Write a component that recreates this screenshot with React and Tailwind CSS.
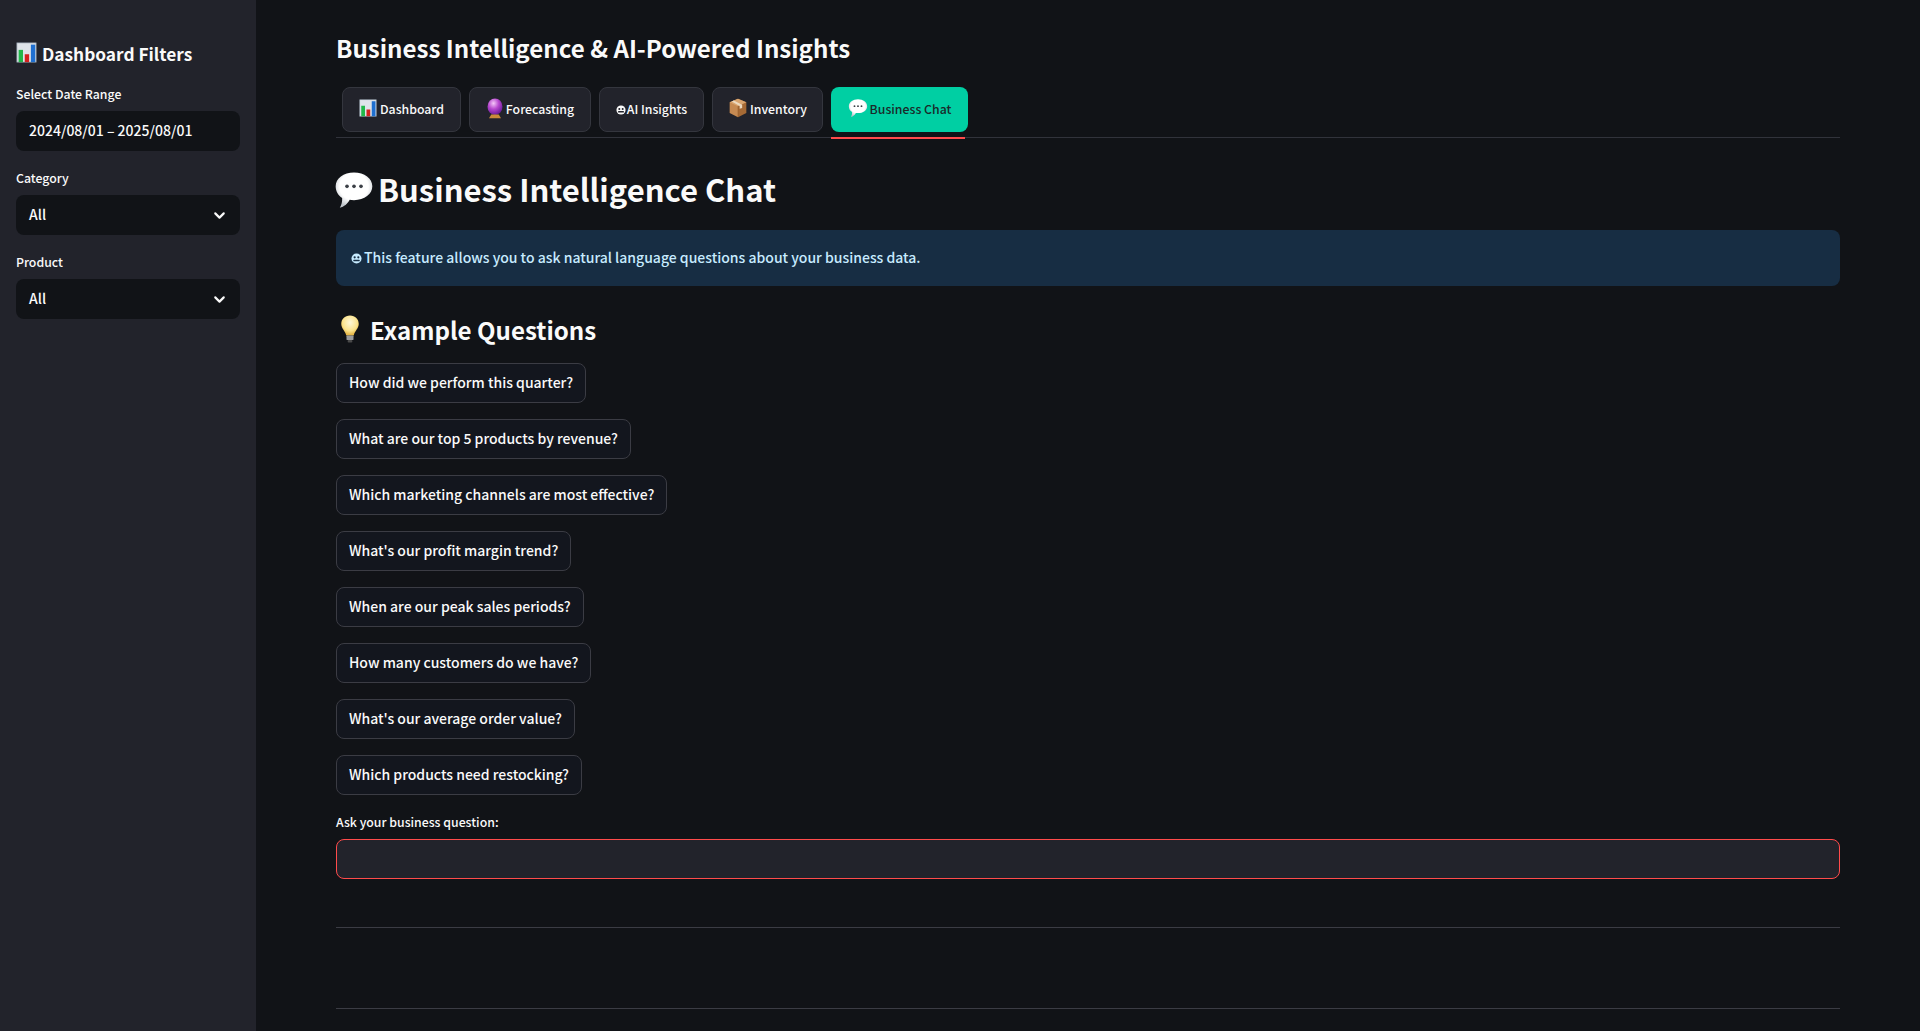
import React from 'react';
import { ChevronDown } from 'lucide-react';

const FONT = { fontFamily: '"Noto Sans CJK SC", "Noto Sans", sans-serif' };

const ChartIcon = ({ className }) => (
  <svg viewBox="0 0 24 24" className={className}>
    <rect x="1" y="1" width="22" height="22" fill="#dfe4ea" />
    <rect x="1" y="1" width="22" height="22" fill="none" stroke="#8f9aa6" strokeWidth="0.8" />
    <rect x="3" y="9" width="5" height="14" fill="#22b84a" />
    <rect x="10" y="14" width="5" height="9" fill="#d3221f" />
    <rect x="17" y="3" width="5" height="20" fill="#1f6fd0" />
  </svg>
);

const BallIcon = ({ className }) => (
  <svg viewBox="0 0 24 28" className={className}>
    <defs>
      <radialGradient id="ball" cx="40%" cy="30%" r="70%">
        <stop offset="0%" stopColor="#f4c6f8" />
        <stop offset="50%" stopColor="#b848cf" />
        <stop offset="100%" stopColor="#6a1b9a" />
      </radialGradient>
    </defs>
    <ellipse cx="12" cy="11.500" rx="10" ry="11" fill="url(#ball)" />
    <path d="M7 22h10l3 5H4z" fill="#c98a3a" />
  </svg>
);

const BoxIcon = ({ className }) => (
  <svg viewBox="0 0 24 24" className={className}>
    <path d="M12 1l10 4v13l-10 5z" fill="#a66a35" />
    <path d="M12 1L2 5v13l10 5z" fill="#c68a52" />
    <path d="M2 5l10 5 10-5-10-4z" fill="#d9a56f" />
    <path d="M7 3l10 5v4l-3 1V9.500L4.500 4.200z" fill="#ecd9bf" />
    <path d="M12 10v13" stroke="#8a5528" strokeWidth="0.6" />
  </svg>
);

const BubbleIcon = ({ className, id }) => (
  <svg viewBox="0 0 24 24" className={className}>
    <defs>
      <radialGradient id={id} cx="50%" cy="40%" r="60%">
        <stop offset="65%" stopColor="#ffffff" />
        <stop offset="100%" stopColor="#bfc4ca" />
      </radialGradient>
    </defs>
    <path
      d="M12 1.500c6.300 0 11 3.600 11 8.300s-4.700 8.300-11 8.300c-.9 0-1.800-.1-2.600-.2C8.200 20.300 6 22.200 3.500 22.600c1-1.600 1.500-3.400 1.400-5.800C2.500 15.300 1 12.800 1 9.800 1 5.100 5.700 1.500 12 1.500z"
      fill={`url(#${id})`}
    />
    <circle cx="7.800" cy="9.800" r="1.100" fill="#3b3f46" />
    <circle cx="12" cy="9.800" r="1.100" fill="#3b3f46" />
    <circle cx="16.200" cy="9.800" r="1.100" fill="#3b3f46" />
  </svg>
);

const BulbIcon = ({ className }) => (
  <svg viewBox="0 0 24 24" className={className}>
    <defs>
      <radialGradient id="bulb" cx="50%" cy="35%" r="60%">
        <stop offset="0%" stopColor="#fff8d8" />
        <stop offset="70%" stopColor="#fbe38c" />
        <stop offset="100%" stopColor="#e8b94a" />
      </radialGradient>
    </defs>
    <path d="M12 0.500c4.500 0 7.500 3.200 7.500 7.200 0 3.800-3.600 6.200-4.300 9.800H8.800C8.100 13.900 4.500 11.500 4.500 7.700 4.500 3.700 7.500.5 12 .5z" fill="url(#bulb)" />
    <rect x="9" y="17.500" width="6" height="4" rx="0.800" fill="#9a9a9a" />
    <rect x="10" y="21.500" width="4" height="2" rx="0.800" fill="#4a4a4a" />
  </svg>
);

const RobotGlyph = ({ className, color = 'currentColor', bg = '#22232b' }) => (
  <svg viewBox="0 0 12 12" className={className}>
    <circle cx="6" cy="6" r="5.500" fill={color} />
    <circle cx="4" cy="4.700" r="1.200" fill={bg} />
    <circle cx="8" cy="4.700" r="1.200" fill={bg} />
    <rect x="2.500" y="7.300" width="7" height="1.800" rx="0.600" fill={bg} />
  </svg>
);

const tabs = [
  { label: 'Dashboard', icon: <ChartIcon className="w-[18px] h-[18px] mb-[4px]" />, width: 'w-[119px]', gap: 'gap-[3px]' },
  { label: 'Forecasting', icon: <BallIcon className="w-[18px] h-[21px] mb-[3px]" />, width: 'w-[122px]', gap: 'gap-[2px]' },
  { label: 'AI Insights', icon: <RobotGlyph className="w-[10px] h-[10px]" />, width: 'w-[105px]', gap: 'gap-[1px]' },
  { label: 'Inventory', icon: <BoxIcon className="w-[20px] h-[20px] mb-[4px]" />, width: 'w-[111px]', gap: 'gap-[2px]' },
];

const questions = [
  'How did we perform this quarter?',
  'What are our top 5 products by revenue?',
  'Which marketing channels are most effective?',
  "What's our profit margin trend?",
  'When are our peak sales periods?',
  'How many customers do we have?',
  "What's our average order value?",
  'Which products need restocking?',
];

const SidebarField = ({ label, value, select }) => (
  <div className="flex flex-col">
    <label className="text-[12.3px] leading-[20px] font-medium text-[#fafafa] mb-[7px]">{label}</label>
    <div className="h-[40px] rounded-lg bg-[#111317] flex items-center justify-between pl-[13px] pr-[12px] text-[14px] font-medium text-[#fafafa]">
      <span className="-mt-[1px]">{value}</span>
      {select && <ChevronDown size={17} strokeWidth={3} className="text-[#fafafa]" />}
    </div>
  </div>
);

export default function App() {
  return (
    <div style={FONT} className="flex h-[1031px] overflow-hidden bg-[#111317] text-[#fafafa]">
      <aside className="w-[256px] shrink-0 bg-[#22232b] px-4 pt-[41px] flex flex-col">
        <div className="flex items-center gap-[5px] h-[26px] mb-[17px]">
          <ChartIcon className="w-[21px] h-[21px] mb-[3px]" />
          <h2 className="text-[17.3px] leading-[26px] font-semibold">Dashboard Filters</h2>
        </div>
        <div className="flex flex-col gap-[17px]">
          <SidebarField label="Select Date Range" value="2024/08/01 – 2025/08/01" />
          <SidebarField label="Category" value="All" select />
          <SidebarField label="Product" value="All" select />
        </div>
      </aside>

      <main className="flex-1 pl-[80px] pr-[80px] pt-[29px] min-w-0">
        <h1 className="text-[24.1px] leading-[38px] font-semibold whitespace-nowrap">Business Intelligence &amp; AI-Powered Insights</h1>

        {/* Tabs */}
        <div className="mt-[20px] h-[51px] flex gap-[8px] pl-[6px] border-b border-[#31333b]">
          {tabs.map((tab) => (
            <button
              key={tab.label}
              className={`${tab.width} ${tab.gap} h-[45px] rounded-lg bg-[#22232b] border border-[#34363e] flex items-center justify-center text-[12.3px] font-medium text-[#fafafa] whitespace-nowrap`}
            >
              {tab.icon}
              <span>{tab.label}</span>
            </button>
          ))}
          <div className="relative h-[51px]">
            <button className="w-[137px] h-[45px] rounded-lg bg-[#00cfa3] flex items-center justify-center gap-[2px] text-[12.3px] font-medium text-[#1b2a2a] whitespace-nowrap">
              <BubbleIcon id="bubble-tab" className="w-[20px] h-[20px] mb-[4px]" />
              <span>Business Chat</span>
            </button>
            <div className="absolute left-0 bottom-[-1px] w-[134px] h-[2px] bg-[#ff4b4b]" />
          </div>
        </div>

        <div className="mt-[26px] flex items-center h-[50px]">
          <BubbleIcon id="bubble-head" className="w-[40px] h-[40px] mt-[2px] -ml-[2px]" />
          <h1 className="ml-[4px] text-[31px] leading-[50px] font-semibold whitespace-nowrap">Business Intelligence Chat</h1>
        </div>

        <div className="mt-[16px] h-[56px] rounded-lg bg-[#172d43] flex items-center gap-[2px] px-[15px] text-[14px] font-medium text-[#c7ebff]">
          <RobotGlyph className="w-[11px] h-[11px]" bg="#172d43" />
          <span className="-mt-[1px]">This feature allows you to ask natural language questions about your business data.</span>
        </div>

        <div className="mt-[26px] flex items-center h-[36px]">
          <BulbIcon className="w-[28px] h-[28px] mb-[3px]" />
          <h2 className="ml-[6px] text-[24.1px] leading-[36px] font-semibold whitespace-nowrap">Example Questions</h2>
        </div>

        {/* Example question buttons */}
        <div className="mt-[15px] flex flex-col gap-[16px] items-start">
          {questions.map((q) => (
            <button
              key={q}
              className="h-[40px] px-[12px] pb-[1px] rounded-lg bg-[#13161e] border border-[#3b3c44] text-[14px] font-medium text-[#fafafa] whitespace-nowrap"
            >
              {q}
            </button>
          ))}
        </div>

        <label className="block mt-[17px] text-[12.3px] leading-[20px] font-medium">Ask your business question:</label>
        <div className="mt-[7px] h-[40px] rounded-lg bg-[#22232b] border border-[#ff4b4b]" />

        <hr className="mt-[48px] border-0 h-px bg-[#3b3c44]" />
        <hr className="mt-[80px] border-0 h-px bg-[#3b3c44]" />
      </main>
    </div>
  );
}
